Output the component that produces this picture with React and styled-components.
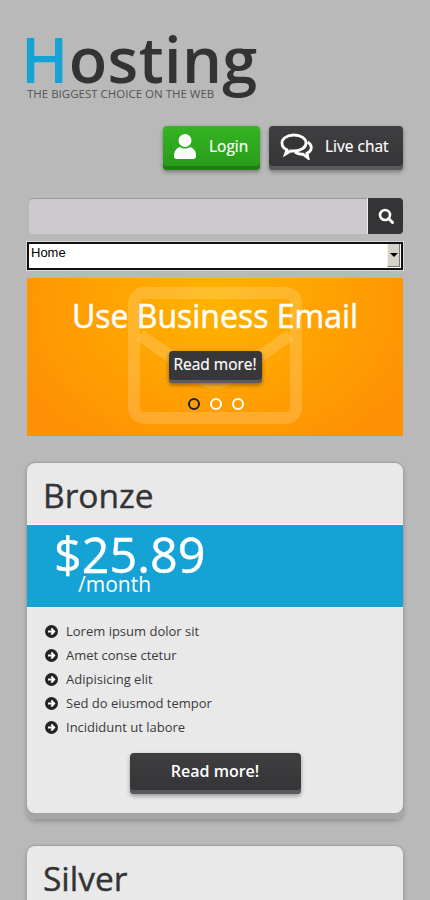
import styled, { createGlobalStyle } from "styled-components"

const Global = createGlobalStyle`
    html, body { margin: 0; padding: 0; }
    body {
        background: #b9b9b9;
        font-family: "Open Sans", "Liberation Sans", sans-serif;
        overflow: hidden;
    }
    * { box-sizing: border-box; }
`;

const Page = styled.div`
    width: 430px;
    height: 900px;
    overflow: hidden;
    padding: 0 27px;
`;

const Logo = styled.div`
    height: 126px;
    padding-top: 33px;
`;

const LogoWord = styled.div`
    font-size: 63px;
    line-height: 52px;
    font-weight: 600;
    color: #333335;
    letter-spacing: 0.4px;
    margin-left: -6px;
    span { color: #15a3d6; }
`;

const Tagline = styled.div`
    margin-top: 2px;
    font-size: 11.5px;
    line-height: 14px;
    color: #555;
    white-space: nowrap;
`;

const ButtonRow = styled.div`
    display: flex;
    justify-content: flex-end;
    gap: 9px;
    margin-bottom: 28px;
`;

const TopButton = styled.a`
    height: 44px;
    width: ${p => p.$w}px;
    display: flex;
    align-items: center;
    gap: ${p => p.$gap}px;
    padding: 0 0 4px ${p => p.$pad}px;
    border-radius: 4px;
    color: #fff;
    font-size: 15.5px;
    -webkit-text-stroke: 0.2px #fff;
    background: ${p => p.$green ? "linear-gradient(#36b424, #279a18)" : "linear-gradient(#3f3e41, #343336)"};
    box-shadow: inset 0 -4px 0 ${p => p.$green ? "#1f7f14" : "#5a5a5e"}, 0 2px 4px rgba(0,0,0,0.35);
`;

const SearchRow = styled.div`
    display: flex;
    height: 36px;
    margin-left: 2px;
    margin-bottom: 8px;
`;

const SearchField = styled.div`
    flex: 1;
    background: #cdc9cc;
    border-radius: 4px 0 0 4px;
    box-shadow: inset 0 1px 0 #9a9799;
`;

const SearchButton = styled.div`
    width: 36px;
    background: #343336;
    border-left: 1px solid #eee;
    border-radius: 0 4px 4px 0;
    display: flex;
    align-items: center;
    justify-content: center;
`;

const Select = styled.div`
    height: 28px;
    background: #fff;
    border: 2px solid #111;
    outline: 1px solid #d8d8d8;
    font-family: "Liberation Sans", sans-serif;
    font-size: 13px;
    line-height: 15px;
    color: #000;
    padding: 1px 2px;
    display: flex;
    justify-content: space-between;
    margin-bottom: 8px;
`;

const SelectArrow = styled.div`
    width: 13px;
    height: 23px;
    margin: -1px -1px 0 0;
    background: #d6d3c8;
    border-left: 1px solid #f4f3ee;
    border-right: 1px solid #777;
    border-bottom: 1px solid #777;
    display: flex;
    align-items: center;
    justify-content: center;
    &::after {
        content: "";
        border-left: 4px solid transparent;
        border-right: 4px solid transparent;
        border-top: 4px solid #000;
    }
`;

const Banner = styled.div`
    position: relative;
    height: 158px;
    margin-bottom: 27px;
    background: radial-gradient(ellipse 215px 165px at 50% 15%, #ffb300, #ff9c03 70%, #fd9204 100%);
    display: flex;
    flex-direction: column;
    align-items: center;
    overflow: hidden;
`;

const Envelope = styled.svg`
    position: absolute;
    left: 101px;
    top: 9px;
`;

const BannerTitle = styled.div`
    position: relative;
    margin-top: 17px;
    font-size: 32px;
    line-height: 42px;
    white-space: nowrap;
    color: #fff;
    -webkit-text-stroke: 0.5px #fff;
`;

const BannerButton = styled.a`
    position: relative;
    margin-top: 14px;
    width: 93px;
    height: 32px;
    border-radius: 4px;
    background: #38373a;
    box-shadow: inset 0 -3px 0 #5a5c68, 0 2px 4px rgba(0,0,0,0.4);
    color: #fff;
    font-size: 15.5px;
    line-height: 27px;
    text-align: center;
    white-space: nowrap;
    -webkit-text-stroke: 0.2px #fff;
`;

const Dots = styled.div`
    position: relative;
    margin: 15px 0 0 2px;
    display: flex;
    gap: 10px;
`;

const Dot = styled.span`
    width: 12px;
    height: 12px;
    border-radius: 50%;
    border: 2px solid ${p => p.$active ? "#1c2340" : "#fff"};
`;

const Card = styled.div`
    background: #e9e9e9;
    border-radius: 8px;
    height: ${p => p.$h}px;
    margin-bottom: 27px;
    box-shadow: inset 0 -6px 0 #a5a5a5, 0 -1px 1px rgba(0,0,0,0.1), 0 2px 5px rgba(0,0,0,0.25);
    overflow: hidden;
`;

const CardTitle = styled.h2`
    margin: 0;
    height: 61px;
    padding: 12px 0 0 16px;
    font-size: 33.5px;
    line-height: 41px;
    font-weight: 400;
    color: #343335;
    -webkit-text-stroke: 0.4px #343335;
`;

const PriceBand = styled.div`
    height: 84px;
    background: #15a3d6;
    color: #fff;
    padding: 11px 0 0 27px;
    border-top: 1px solid #f6f6f6;
    border-bottom: 1px solid #f6f6f6;
`;

const Price = styled.div`
    font-size: 48.5px;
    line-height: 36px;
    -webkit-text-stroke: 0.4px #fff;
`;

const Period = styled.div`
    font-size: 21px;
    line-height: 24px;
    margin-left: 24px;
`;

const Features = styled.ul`
    list-style: none;
    margin: 0;
    padding: 11px 0 0 18px;
`;

const Feature = styled.li`
    height: 24px;
    display: flex;
    align-items: center;
    gap: 8px;
    font-size: 13px;
    color: #3a3a3c;
`;

const CardButton = styled.a`
    display: block;
    width: 171px;
    height: 41px;
    margin: 14px auto 0;
    border-radius: 4px;
    background: linear-gradient(#3f3e41, #343336);
    box-shadow: inset 0 -4px 0 #5a5a5e, 0 2px 4px rgba(0,0,0,0.35);
    color: #fff;
    font-size: 16px;
    font-weight: 600;
    line-height: 36px;
    text-align: center;
`;

function UserIcon() {
    return (
        <svg width="22" height="25" viewBox="0 0 22 25" fill="#fff">
            <ellipse cx="11" cy="6.5" rx="6.5" ry="6.5" />
            <path d="M0 22c0-5 2-7.500 6-9 3 2 7 2 10 0 4 1.500 6 4 6 9 0 2-1 3-3 3H3c-2 0-3-1-3-3z" />
        </svg>
    )
}

function ChatIcon() {
    return (
        <svg width="33" height="27" viewBox="0 0 33 27" fill="none" stroke="#fff" strokeWidth="2.8">
            <path d="M14 2C7 2 2 5.500 2 10c0 3 2 5.500 5 6.800L5.500 21 11 17.800c1 .2 2 .2 3 .2 7 0 12-3.500 12-8s-5-8-12-8z" fill="#343336" />
            <path d="M27.500 9c2.300 1.300 3.800 3.300 3.800 5.500 0 2.500-1.700 4.500-4.300 5.700L28 25l-5-3.800c-3 .2-6-.4-8-2" />
        </svg>
    )
}

function SearchIcon() {
    return (
        <svg width="16" height="16" viewBox="0 0 16 16" fill="none" stroke="#fff">
            <circle cx="7" cy="7" r="5" strokeWidth="2.600" />
            <path d="M10.500 10.500L14.500 14.500" strokeWidth="3" strokeLinecap="round" />
        </svg>
    )
}

function ArrowIcon() {
    return (
        <svg width="13" height="13" viewBox="0 0 13 13">
            <circle cx="6.500" cy="6.500" r="6.500" fill="#232325" />
            <path d="M3 6.500h6M6.300 3.500l3 3-3 3" fill="none" stroke="#fff" strokeWidth="1.800" />
        </svg>
    )
}

const lista = ["Lorem ipsum dolor sit", "Amet conse ctetur", "Adipisicing elit", "Sed do eiusmod tempor", "Incididunt ut labore"];

export default function App() {
    return (
        <Page>
            <Global />
            <Logo>
                <LogoWord><span>H</span>osting</LogoWord>
                <Tagline>THE BIGGEST CHOICE ON THE WEB</Tagline>
            </Logo>

            <ButtonRow>
                <TopButton $green $w={97} $pad={11} $gap={13}><UserIcon />Login</TopButton>
                <TopButton $w={134} $pad={11} $gap={12}><ChatIcon />Live chat</TopButton>
            </ButtonRow>

            <SearchRow>
                <SearchField />
                <SearchButton><SearchIcon /></SearchButton>
            </SearchRow>

            <Select>Home<SelectArrow /></Select>

            <Banner>
                <Envelope width="174" height="138" viewBox="0 0 174 138" fill="none" stroke="rgba(255,255,255,0.17)" strokeWidth="12">
                    <rect x="6" y="6" width="162" height="125" rx="10" />
                    <path d="M12 48l62 44c8 5 18 5 26 0l62-44" />
                </Envelope>
                <BannerTitle>Use Business Email</BannerTitle>
                <BannerButton>Read more!</BannerButton>
                <Dots>
                    <Dot $active />
                    <Dot />
                    <Dot />
                </Dots>
            </Banner>

            <Card $h={356}>
                <CardTitle>Bronze</CardTitle>
                <PriceBand>
                    <Price>$25.89</Price>
                    <Period>/month</Period>
                </PriceBand>
                <Features>
                    {lista.map((item, idx) => {
                        return <Feature key={idx}><ArrowIcon />{item}</Feature>
                    })}
                </Features>
                <CardButton>Read more!</CardButton>
            </Card>

            <Card $h={120}>
                <CardTitle>Silver</CardTitle>
            </Card>
        </Page>
    )
}
